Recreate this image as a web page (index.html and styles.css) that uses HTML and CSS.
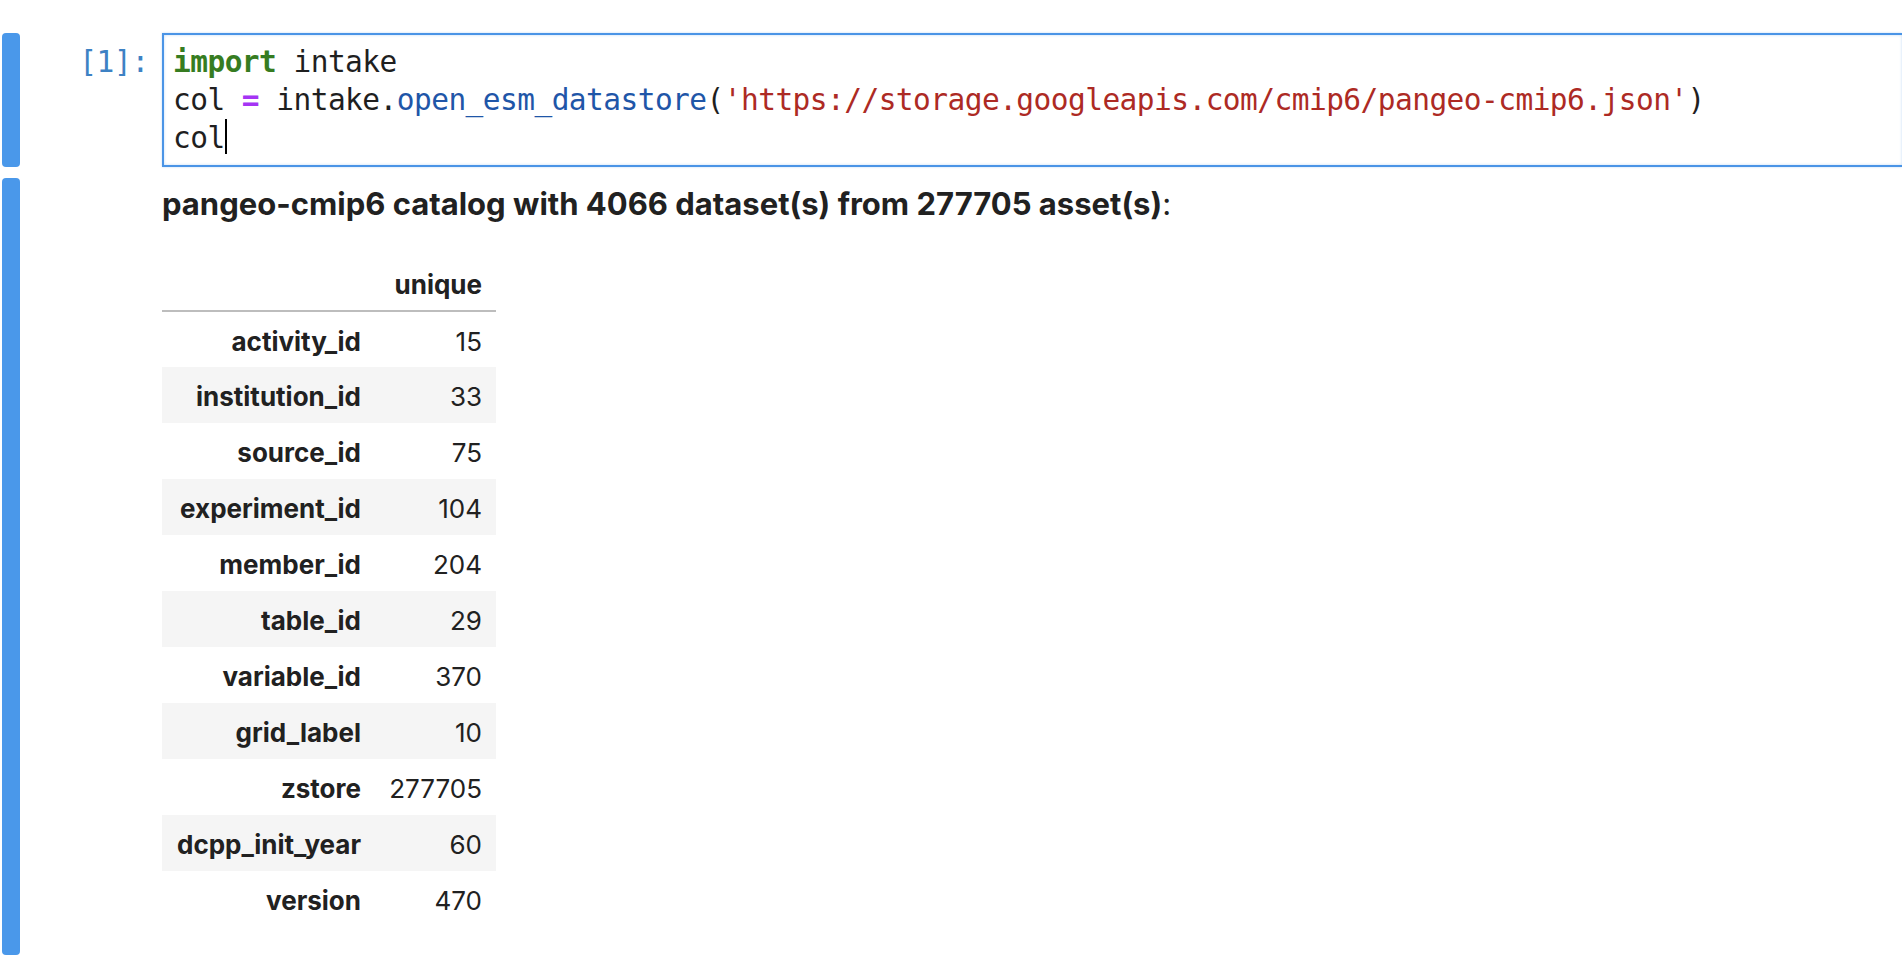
FILE: index.html
```html
<!DOCTYPE html>
<html lang="en">
<head>
<meta charset="utf-8">
<title>pangeo-cmip6 catalog</title>
<link rel="stylesheet" href="styles.css">
</head>
<body>
<div class="notebook">
  <div class="cell cell-input">
    <div class="collapser"></div>
    <div class="prompt">[1]:</div>
    <div class="editor">
<pre class="code"><span class="kw">import</span> intake
col <span class="op">=</span> intake.<span class="prop">open_esm_datastore</span>(<span class="str">'https://storage.googleapis.com/cmip6/pangeo-cmip6.json'</span>)
col<span class="cursor"></span></pre>
    </div>
  </div>
  <div class="cell cell-output">
    <div class="collapser"></div>
    <div class="prompt"></div>
    <div class="output">
      <p class="summary"><strong>pangeo-cmip6 catalog with 4066 dataset(s) from 277705 asset(s)</strong>:</p>
      <table class="df">
        <thead>
          <tr><th class="label"></th><th class="value">unique</th></tr>
        </thead>
        <tbody>
          <tr><th class="label">activity_id</th><td class="value">15</td></tr>
          <tr><th class="label">institution_id</th><td class="value">33</td></tr>
          <tr><th class="label">source_id</th><td class="value">75</td></tr>
          <tr><th class="label">experiment_id</th><td class="value">104</td></tr>
          <tr><th class="label">member_id</th><td class="value">204</td></tr>
          <tr><th class="label">table_id</th><td class="value">29</td></tr>
          <tr><th class="label">variable_id</th><td class="value">370</td></tr>
          <tr><th class="label">grid_label</th><td class="value">10</td></tr>
          <tr><th class="label">zstore</th><td class="value">277705</td></tr>
          <tr><th class="label">dcpp_init_year</th><td class="value">60</td></tr>
          <tr><th class="label">version</th><td class="value">470</td></tr>
        </tbody>
      </table>
    </div>
  </div>
</div>
</body>
</html>
```
FILE: styles.css
```css
html, body {
  margin: 0;
  padding: 0;
  background: #ffffff;
}

body {
  color: #212121;
  font-family: Inter, "Noto Sans", "Liberation Sans", sans-serif;
  overflow: hidden;
}

.notebook {
  padding-top: 33px;
}

.cell {
  display: flex;
  padding-left: 2px;
}

.cell-output {
  margin-top: 11px;
}

.collapser {
  flex: none;
  width: 18px;
  border-radius: 4px;
  background: #4a98ea;
}

.prompt {
  flex: none;
  width: 142px;
  box-sizing: border-box;
  padding: 10px 13px 0 0;
  text-align: right;
  font-family: "DejaVu Sans Mono", "Liberation Mono", monospace;
  font-size: 29.5px;
  line-height: 38px;
  letter-spacing: -0.3px;
  color: #3d82c4;
}

.editor {
  flex: 1;
  min-width: 0;
  height: 134px;
  box-sizing: border-box;
  border: 2px solid #4a94e6;
  border-right: none;
  padding: 8px 0 8px 9px;
  box-shadow: inset 0 0 3px rgba(74, 148, 230, 0.35), 0 0 2px rgba(74, 148, 230, 0.35);
  background: #ffffff;
}

.code {
  margin: 0;
  font-family: "DejaVu Sans Mono", "Liberation Mono", monospace;
  font-size: 29.5px;
  line-height: 38px;
  letter-spacing: -0.55px;
  color: #1f1f1f;
  white-space: pre;
}

.kw {
  color: #367c21;
  font-weight: bold;
}

.op {
  color: #a534f4;
  font-weight: bold;
}

.prop {
  color: #1f56a8;
}

.str {
  color: #ad2a24;
}

.cursor {
  display: inline-block;
  width: 0;
  height: 35px;
  border-left: 2px solid #000000;
  vertical-align: top;
}

.output {
  flex: 1;
  padding: 3px 0 28px 0;
}

.summary {
  margin: 0 0 29px 0;
  font-size: 31px;
  line-height: 46px;
  color: #212121;
}

.summary strong {
  font-weight: 700;
}

.df {
  border-collapse: collapse;
  border-spacing: 0;
  font-size: 26px;
  color: #212121;
}

.df th,
.df td {
  box-sizing: border-box;
  height: 56px;
  padding: 4px 14px 0 14px;
  line-height: 26px;
  text-align: right;
  vertical-align: middle;
  white-space: nowrap;
}

.df thead th {
  height: 55px;
  border-bottom: 2px solid #bdbdbd;
}

.df th {
  font-weight: 700;
}

.df td {
  font-weight: 400;
}

.df .label {
  width: 213px;
}

.df .value {
  width: 121px;
}

.df tbody tr:nth-child(even) {
  background: #f5f5f5;
}
```
